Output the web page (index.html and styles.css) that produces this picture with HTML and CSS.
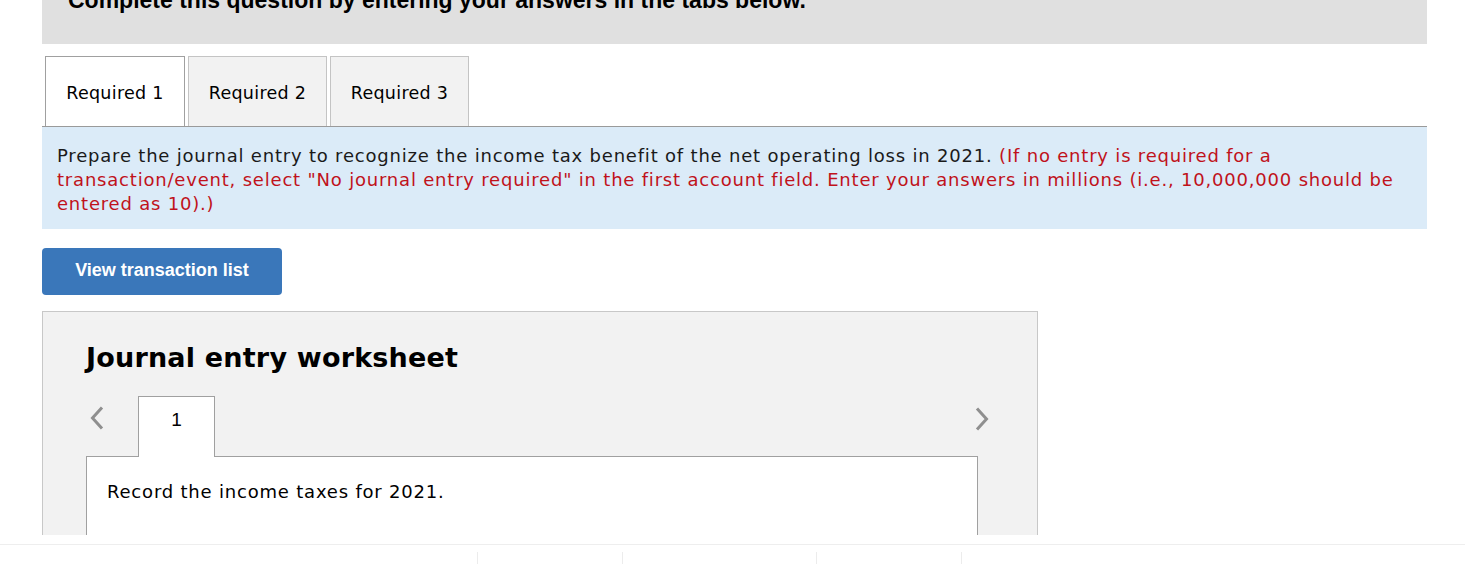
FILE: index.html
```html
<!DOCTYPE html>
<html lang="en">
<head>
    <meta charset="UTF-8">
    <title>Journal entry worksheet</title>
    <link rel="stylesheet" href="styles.css">
</head>
<body>
    <div class="viewport">
        <div class="question">
            <div class="intro">
                <h2>Complete this question by entering your answers in the tabs below.</h2>
            </div>

            <div class="req-tabs">
                <div class="req-tab active">Required 1</div>
                <div class="req-tab">Required 2</div>
                <div class="req-tab">Required 3</div>
            </div>

            <div class="instructions">
                Prepare the journal entry to recognize the income tax benefit of the net operating loss in 2021.
                <span class="note">(If no entry is required for a transaction/event, select "No journal entry required" in the first account field. Enter your answers in millions (i.e., 10,000,000 should be entered as 10).)</span>
            </div>

            <button class="view-btn" type="button">View transaction list</button>

            <div class="worksheet">
                <h3>Journal entry worksheet</h3>
                <div class="ws-nav">
                    <span class="chev">
                        <svg width="14" height="24" viewBox="0 0 14 24"><path d="M12 1.5 L2.5 12 L12 22.5" fill="none" stroke="#8f8f8f" stroke-width="3"/></svg>
                    </span>
                    <div class="ws-tab">1</div>
                    <span class="chev right">
                        <svg width="14" height="24" viewBox="0 0 14 24"><path d="M2 1.5 L11.5 12 L2 22.5" fill="none" stroke="#8f8f8f" stroke-width="3"/></svg>
                    </span>
                </div>
                <div class="ws-body">
                    <p>Record the income taxes for 2021.</p>
                </div>
            </div>
        </div>
    </div>

    <footer class="footer">
        <div class="foot-cell"></div>
        <div class="foot-cell"></div>
        <div class="foot-cell"></div>
        <div class="foot-cell"></div>
    </footer>
</body>
</html>
```

FILE: styles.css
```css
* {
    margin: 0;
    padding: 0;
    box-sizing: border-box;
}

body {
    background: #fff;
    color: #000;
    font-family: 'DejaVu Sans', Verdana, sans-serif;
}

.viewport {
    height: 535px;
    overflow: hidden;
}

.question {
    margin: 0 38px 0 42px;
}

.intro {
    display: flow-root;
    background: #e0e0e0;
    height: 44px;
    padding: 0 26px;
}

.intro h2 {
    font-family: 'Liberation Sans', Arial, sans-serif;
    font-size: 23px;
    font-weight: 700;
    line-height: 28px;
    margin-top: -14px;
    white-space: nowrap;
}

.req-tabs {
    display: flex;
    gap: 3px;
    margin-top: 12px;
    padding-left: 3px;
    border-bottom: 1px solid #9a9a9a;
}

.req-tab {
    width: 139px;
    height: 70px;
    display: flex;
    align-items: center;
    justify-content: center;
    padding-top: 2px;
    font-size: 17.5px;
    letter-spacing: 0.3px;
    background: #f2f2f2;
    border: 1px solid #c4c4c4;
    border-bottom: none;
}

.req-tab.active {
    width: 140px;
    background: #fff;
    border-color: #a0a0a0;
    margin-bottom: -1px;
}

.instructions {
    background: #dbebf8;
    padding: 17px 15px 13px;
    font-size: 18px;
    letter-spacing: 0.8px;
    line-height: 24px;
    color: #1a1a1a;
}

.instructions .note {
    color: #c0121b;
}

.view-btn {
    display: block;
    margin-top: 19px;
    width: 240px;
    height: 47px;
    background: #3a77ba;
    color: #fff;
    border: none;
    border-radius: 4px;
    font-family: 'Liberation Sans', Arial, sans-serif;
    font-size: 18px;
    font-weight: 700;
    padding-bottom: 2px;
}

.worksheet {
    margin-top: 16px;
    width: 996px;
    height: 300px;
    background: #f2f2f2;
    border: 1px solid #c8c8c8;
    padding: 28px 59px 0 43px;
}

.worksheet h3 {
    font-size: 27px;
    font-weight: 700;
    letter-spacing: 0.2px;
    line-height: 36px;
}

.ws-nav {
    display: flex;
    align-items: flex-start;
    margin-top: 20px;
}

.chev {
    width: 52px;
    padding: 10px 0 0 4px;
}

.chev.right {
    margin-left: auto;
    width: auto;
    padding: 11px 0 0 0;
    margin-right: -11px;
}

.ws-tab {
    width: 77px;
    height: 61px;
    background: #fff;
    border: 1px solid #a0a0a0;
    border-bottom: none;
    margin-bottom: -1px;
    position: relative;
    z-index: 1;
    text-align: center;
    font-family: 'Liberation Sans', Arial, sans-serif;
    font-size: 19px;
    line-height: 22px;
    padding-top: 12px;
}

.ws-body {
    background: #fff;
    border: 1px solid #a0a0a0;
    height: 200px;
    padding: 23px 20px;
}

.ws-body p {
    font-size: 18px;
    letter-spacing: 0.8px;
    line-height: 24px;
}

.footer {
    margin-top: 9px;
    border-top: 1px solid #eeeeee;
    height: 20px;
    display: flex;
    padding-left: 477px;
    padding-top: 7px;
}

.foot-cell {
    border-left: 1px solid #ececec;
    height: 13px;
}

.foot-cell:nth-child(1) { width: 145px; }
.foot-cell:nth-child(2) { width: 194px; }
.foot-cell:nth-child(3) { width: 145px; }
.foot-cell:nth-child(4) { width: 10px; }
```
